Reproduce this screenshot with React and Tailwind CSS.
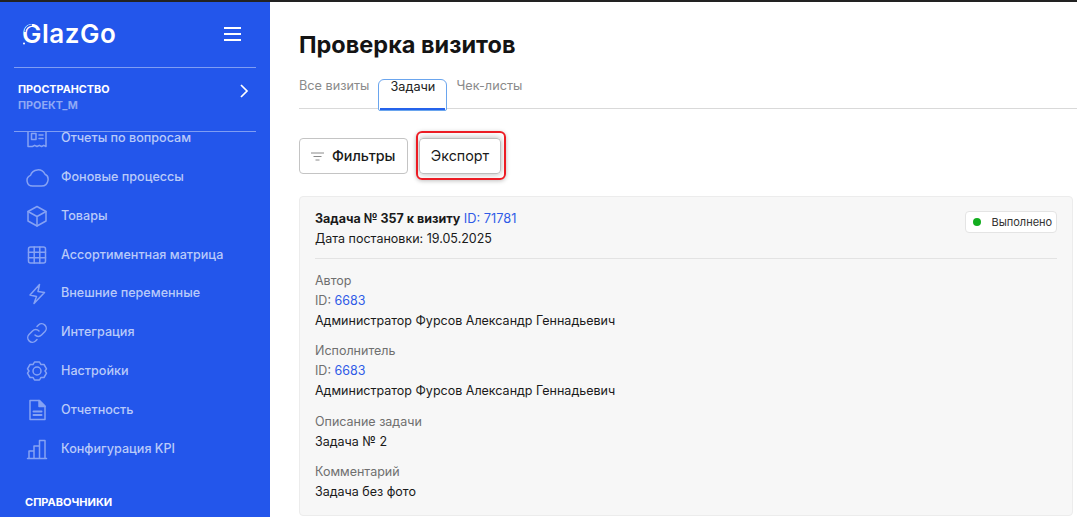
import React from "react";

const I = ({ children }) => (
  <svg width="24" height="24" viewBox="0 0 24 24" fill="none" stroke="currentColor" strokeWidth="1.5" strokeLinecap="round" strokeLinejoin="round" className="shrink-0 text-[#86a2f4]">
    {children}
  </svg>
);

const items = [
  ["Отчеты по вопросам", <><path d="M3 3h18v16.500l-2.200-1.200-2.200 1.200-2.300-1.200-2.300 1.200-2.300-1.200-2.300 1.200L3 19.500z" /><rect x="6.500" y="6.500" width="4.500" height="6" /><path d="M14 8h4M14 11.500h4" /></>],
  ["Фоновые процессы", <path d="M7.500 20a5.500 5.500 0 0 1-2-10.600A7.800 7.800 0 0 1 20 8.300c2.800 1.200 3.300 4 3 6-.5 3.200-3 5.700-6.500 5.700z" />],
  ["Товары", <><path d="M12 2.500l9 5v9.500l-9 5-9-5V7.500z" /><path d="M3 7.500l9 5 9-5M12 12.500V22" /></>],
  ["Ассортиментная матрица", <><rect x="3.500" y="4" width="17" height="16" rx="2" /><path d="M3.500 9.300h17M3.500 14.700h17M9.200 4v16M14.800 4v16" /></>],
  ["Внешние переменные", <path d="M14.500 2.500L5 13l6.500 1.500L9 21.500 19.500 10.500 13 9.500z" />],
  ["Интеграция", <><path d="M10 14a4.500 4.500 0 0 0 6.500 0l3.500-3.500A4.600 4.600 0 0 0 13.500 4l-1.500 1.500" /><path d="M14 10a4.500 4.500 0 0 0-6.500 0L4 13.500A4.600 4.600 0 0 0 10.500 20l1.500-1.500" /></>],
  ["Настройки", <><circle cx="12" cy="12" r="4" /><path d="M9.500 3h5l1.500 2.600 3-.1 2.500 4.300-1.500 2.200 1.500 2.200-2.500 4.300-3-.1L14.500 21h-5L8 18.400l-3 .1-2.500-4.300L4 12 2.500 9.800 5 5.500l3 .1z" /></>],
  ["Отчетность", <><path d="M5 2.500h9.500L20 8v13.500H5z" /><path d="M14 2.500L20 8.500h-6z" fill="currentColor" /><path d="M8.500 13.500h8M8.500 17h8" strokeWidth="2" /></>],
  ["Конфигурация KPI", <><path d="M2.500 21.500h19" /><path d="M4 21v-7h5v7M9 21V9h5.500v12M14.500 21V3.500H20V21" /></>],
];

const Field = ({ label, children, className = "" }) => (
  <div className={"flex flex-col gap-[3px] text-[12.500px] leading-[17px] text-[#1a1a1a] " + className}>
    <div className="text-[#6f6f6f]">{label}</div>
    {children}
  </div>
);

const Person = () => (
  <>
    <div><span className="text-[#6f6f6f]">ID: </span><span className="text-[#2f5be7]">6683</span></div>
    <div>Администратор Фурсов Александр Геннадьевич</div>
  </>
);

export default function App() {
  return (
    <div className="w-[1077px] h-[517px] overflow-hidden flex flex-col bg-white font-['Inter',sans-serif]">
      <div className="h-[2px] bg-[#222222] shrink-0" />
      <div className="flex flex-1 min-h-0">
        <aside className="w-[270px] shrink-0 bg-[#2356eb] flex flex-col overflow-hidden text-white">
          <div className="h-[66px] shrink-0 mx-[14px] border-b border-[#7f9df3] flex items-start justify-between pl-[8px] pr-[14px] pt-[16px]">
            <span className="relative text-[26px] leading-[32px] font-semibold tracking-[0.5px]">
              GlazGo
              <svg width="20" height="32" viewBox="0 0 20 32" fill="none" className="absolute left-0 top-0">
                <path d="M3 14a7 7 0 0 1 7-7" stroke="#2356eb" strokeWidth="1.300" />
                <circle cx="2" cy="25.500" r="1" fill="white" />
              </svg>
            </span>
            <svg width="20" height="16" viewBox="0 0 20 16" fill="none" stroke="white" strokeWidth="2" className="mt-[8px]">
              <path d="M2 2h17M2 8h17M2 14h17" />
            </svg>
          </div>
          <div className="h-[64px] shrink-0 mx-[14px] border-b border-[#7f9df3] flex items-start justify-between px-[4px] pt-[15px]">
            <div className="flex flex-col gap-[2px] text-[10.800px] leading-[14px] font-bold">
              <span>ПРОСТРАНСТВО</span>
              <span className="text-[#8fa9f5]">ПРОЕКТ_М</span>
            </div>
            <svg width="16" height="16" viewBox="0 0 16 16" fill="none" stroke="white" strokeWidth="1.700">
              <path d="M5 2l6 6-6 6" />
            </svg>
          </div>
          <nav className="flex-1 min-h-0 overflow-hidden flex flex-col">
            <div className="flex flex-col gap-[14.800px] pl-[25px] -mt-[5.300px]">
              {items.map(([t, icon]) => (
                <div key={t} className="flex items-center gap-[12px] h-[24px] text-[12.600px] font-medium text-[#b9caf9]">
                  <I>{icon}</I>
                  <span>{t}</span>
                </div>
              ))}
            </div>
            <div className="pl-[25px] mt-[34px] text-[11px] leading-[14px] font-bold">СПРАВОЧНИКИ</div>
          </nav>
        </aside>
        <main className="flex-1 min-w-0 pl-[29px] pt-[29px]">
          <h1 className="text-[23.500px] leading-[28px] font-bold text-[#141414]">Проверка визитов</h1>
          <div className="mt-[20px] h-[30px] border-b border-[#d9d9d9] flex items-start text-[12.700px] leading-[14px] text-[#8a8a8a]">
            <span>Все визиты</span>
            <span className="ml-[9px] w-[69px] h-[32px] shrink-0 border border-[#6aa5ee] rounded-t-[6px] rounded-b-[2px] text-center leading-[13px] text-[#222222] relative bg-white">
              Задачи
              <span className="absolute left-[1px] right-[1px] bottom-0 h-[2px] bg-[#2563eb]" />
            </span>
            <span className="ml-[9px]">Чек-листы</span>
          </div>
          <div className="mt-[29px] flex items-center gap-[11px]">
            <div className="h-[36px] w-[109px] border border-[#c4c4c4] rounded-[4px] flex items-center pl-[11px] gap-[8px] text-[14.300px] font-medium text-[#1a1a1a]">
              <svg width="13" height="9" viewBox="0 0 13 9" fill="none" stroke="#8a8a8a" strokeWidth="1">
                <path d="M0 1h13M2.500 4.500h8M4.500 8h4" />
              </svg>
              Фильтры
            </div>
            <div className="relative h-[36px] w-[82px] border border-[#bdbdbd] rounded-[4px] flex items-center justify-center text-[14.300px] text-[#1a1a1a] shadow-[0_0_6px_rgba(0,0,0,0.3)]">
              Экспорт
              <span className="absolute -left-[4px] -right-[6px] -top-[8px] -bottom-[7px] border-2 border-[#ec1c24] rounded-[6px] shadow-[0_1px_4px_rgba(0,0,0,0.25)]" />
            </div>
          </div>
          <section className="mt-[22px] mr-[4px] h-[320px] border border-[#ececec] rounded-[4px] bg-[#f7f7f7] px-[15px] pt-[12px]">
            <div className="flex items-start justify-between border-b border-[#e3e3e3] h-[50px]">
              <div className="text-[12.500px] leading-[20px] text-[#1a1a1a]">
                <div><span className="font-bold">Задача № 357 к визиту</span> <span className="text-[12.800px] text-[#2f5be7]">ID: 71781</span></div>
                <div>Дата постановки: 19.05.2025</div>
              </div>
              <div className="h-[22px] w-[92px] mt-[2px] bg-white border border-[#e4e4e4] rounded-[4px] flex items-center pl-[7px] gap-[11px] text-[11px] text-[#333333]">
                <span className="w-[7.500px] h-[7.500px] rounded-full bg-[#13ad1f]" />
                Выполнено
              </div>
            </div>
            <div className="pt-[13px] flex flex-col gap-[13px]">
              <Field label="Автор"><Person /></Field>
              <Field label="Исполнитель"><Person /></Field>
              <Field label="Описание задачи" className="mt-[1px]"><div>Задача № 2</div></Field>
              <Field label="Комментарий"><div>Задача без фото</div></Field>
            </div>
          </section>
        </main>
      </div>
    </div>
  );
}
